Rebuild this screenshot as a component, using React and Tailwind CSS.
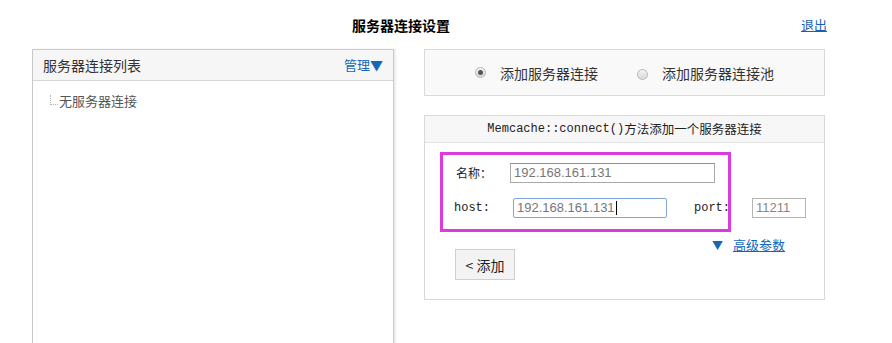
import React from "react";

const cjk = { fontFamily: '"Noto Sans CJK SC", "Liberation Sans", sans-serif' };

function Radio({ checked }) {
  return (
    <span className="relative inline-flex h-[11px] w-[11px] shrink-0 items-center justify-center rounded-full border border-[#b8b8b8] bg-gradient-to-b from-[#f4f4f4] to-[#d9d9d9]">
      {checked && <span className="h-[5px] w-[5px] rounded-full bg-[#555]" />}
    </span>
  );
}

export default function App() {
  return (
    <div className="relative h-[343px] w-[892px] overflow-hidden bg-white text-[#333]" style={cjk}>
      {/* Top bar */}
      <div className="flex h-[49px] items-center">
        <div className="ml-[352px] text-[14px] font-bold leading-[20px] text-black">服务器连接设置</div>
        <a className="ml-auto mr-[65px] text-[13px] leading-[20px] text-[#1560b8] underline">退出</a>
      </div>

      <div className="flex gap-[30px] pl-[32px]">
        {/* Left panel */}
        <div className="h-[320px] w-[362px] shrink-0 border border-[#c9c9c9] shadow-[2px_0_2px_rgba(0,0,0,0.08)]">
          <div className="flex h-[31px] items-center justify-between border-b border-[#d6d6d6] bg-[#f6f6f6] px-[10px]">
            <span className="text-[14px] leading-[20px] text-[#333]">服务器连接列表</span>
            <span className="text-[13px] leading-[20px] text-[#1466b8]">管理▼</span>
          </div>
          <div className="flex items-end pl-[17px] pt-[11px]">
            <span className="mb-[5px] h-[10px] w-[8px] border-b border-l border-dotted border-[#b5b5b5]" />
            <span className="ml-[1px] text-[13px] leading-[18px] text-[#555]">无服务器连接</span>
          </div>
        </div>

        {/* Right column */}
        <div className="flex w-[401px] shrink-0 flex-col">
          <div className="flex h-[47px] items-center border border-[#d9d9d9] bg-[#f9f9f9] pl-[50px]">
            <Radio checked />
            <span className="ml-[14px] text-[14px] leading-[20px] text-[#333]">添加服务器连接</span>
            <span className="ml-[39px]">
              <Radio />
            </span>
            <span className="ml-[14px] text-[14px] leading-[20px] text-[#333]">添加服务器连接池</span>
          </div>

          <div className="mt-[19px] border border-[#d9d9d9]">
            <div className="flex h-[27px] items-center justify-center border-b border-[#e2e2e2] bg-[#f7f7f7] text-[12.5px] leading-[18px] text-[#222]">
              <span className="text-[12px]" style={{ fontFamily: '"Liberation Mono", monospace' }}>
                Memcache::connect()
              </span>
              <span>方法添加一个服务器连接</span>
            </div>

            <div className="relative pb-[19px] pt-[20px]">
              {/* Row 1 */}
              <div className="flex h-[20px] items-center">
                <span className="w-[85px] pl-[31px] text-[12px] leading-[20px] text-[#222]">名称：</span>
                <div
                  className="flex h-[20px] w-[205px] items-center border border-[#a9a9a9] border-t-[#8f8f8f] bg-white px-[3px] text-[13px] text-[#777]"
                  style={{ fontFamily: '"Liberation Sans", Arial, sans-serif' }}
                >
                  192.168.161.131
                </div>
              </div>

              {/* Row 2 */}
              <div className="mt-[15px] flex h-[20px] items-center">
                <span
                  className="w-[88px] pl-[29px] text-[12px] leading-[20px] text-[#222]"
                  style={{ fontFamily: '"Liberation Mono", monospace' }}
                >
                  host:
                </span>
                <div
                  className="flex h-[20px] w-[154px] items-center rounded-[2px] border border-[#7fa6d6] bg-white px-[3px] text-[13px] text-[#777]"
                  style={{ fontFamily: '"Liberation Sans", Arial, sans-serif' }}
                >
                  192.168.161.131
                  <span className="ml-[1px] h-[14px] w-[1px] bg-black" />
                </div>
                <span
                  className="ml-[27px] w-[58px] text-[12px] leading-[20px] text-[#222]"
                  style={{ fontFamily: '"Liberation Mono", monospace' }}
                >
                  port:
                </span>
                <div
                  className="flex h-[20px] w-[54px] items-center border border-[#b5b5b5] bg-white px-[3px] text-[13px] text-[#888]"
                  style={{ fontFamily: '"Liberation Sans", Arial, sans-serif' }}
                >
                  11211
                </div>
              </div>

              {/* Button + advanced link */}
              <div className="flex items-start justify-between pl-[30px] pr-[39px]">
                <button className="mt-[31px] flex h-[31px] w-[60px] items-center justify-center border border-[#cfcfcf] bg-[#f3f3f3] text-[14px] leading-[20px] text-[#222]">
                  &lt; 添加
                </button>
                <div className="mt-[19px] flex items-center">
                  <span className="text-[11px] leading-[14px] text-[#1466b8]">▼</span>
                  <a className="ml-[10px] text-[13px] leading-[16px] text-[#1466b8] underline">高级参数</a>
                </div>
              </div>

              {/* Annotation overlay */}
              <div className="pointer-events-none absolute left-[15px] top-[9px] h-[80px] w-[291px] border-[3px] border-[#dc3adc]" />
            </div>
          </div>
        </div>
      </div>
    </div>
  );
}
